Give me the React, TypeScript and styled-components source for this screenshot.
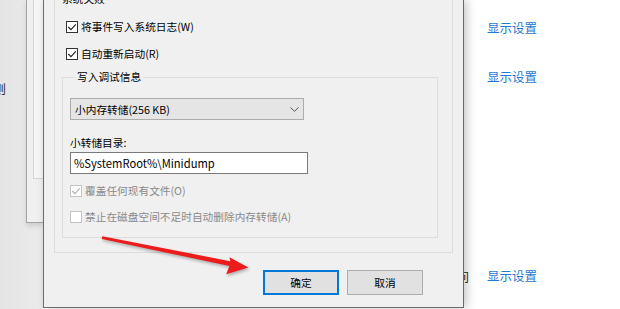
import styled, { createGlobalStyle } from 'styled-components'

const GlobalStyle = createGlobalStyle`
  html, body {
    margin: 0;
    padding: 0;
    background: #ffffff;
  }
`

const UI_FONT = `"Noto Sans CJK SC", "Liberation Sans", sans-serif`

const Screen = styled.div`
  position: relative;
  display: flex;
  width: 620px;
  height: 309px;
  overflow: hidden;
  background: #ffffff;
  font-family: ${UI_FONT};
`

// windows that lie behind the dialog, on the left
const Backdrop = styled.div`
  flex: none;
  display: flex;
  width: 43px;
  background: linear-gradient(90deg, #e4e4e4, #ebebeb);
`
const PageEdge = styled.div`
  flex: none;
  width: 26px;
  padding-top: 81px;
  overflow: hidden;
`
const CutGlyph = styled.span`
  display: block;
  margin-left: -6px;
  font-size: 12px;
  line-height: 16px;
  color: #2a2a2a;
`
const BackWindow = styled.div`
  flex: 1;
  align-self: flex-start;
  display: flex;
  height: 222px;
  padding-left: 6px;
  background: #f0f0f0;
  border-left: 1px solid #a3a3a3;
  border-bottom: 1px solid #a3a3a3;
  box-shadow: 0 3px 5px rgba(0, 0, 0, 0.12);
`
const BackPanel = styled.div`
  flex: 1;
  height: 178px;
  background: #f6f6f6;
  border-left: 1px solid #d6d6d6;
  border-bottom: 1px solid #d6d6d6;
`

const Dialog = styled.div`
  position: relative;
  z-index: 1;
  flex: none;
  display: flex;
  flex-direction: column;
  width: 421px;
  height: 308px;
  box-sizing: border-box;
  padding: 0 0 0 10px;
  background: #f0f0f0;
  border: 1px solid #6b6b6b;
  border-top: none;
  box-shadow: 3px 0 9px rgba(0, 0, 0, 0.22);
  font-size: 10.7px;
  color: #000;
`

const Group = styled.fieldset<{ $outer?: boolean }>`
  margin: ${(p) => (p.$outer ? '-9px 0 0 0' : '9px 14px 14px 7px')};
  padding: ${(p) => (p.$outer ? '0' : '0 0 14px 7px')};
  width: ${(p) => (p.$outer ? '399px' : 'auto')};
  align-self: stretch;
  box-sizing: border-box;
  min-inline-size: 0;
  border: 1px solid #dcdcdc;
  display: flex;
  flex-direction: column;
  align-items: flex-start;
`
const Legend = styled.legend`
  margin-left: 5px;
  padding: 0 2px;
  font-size: 10.7px;
  line-height: 16px;
`

const CheckRow = styled.label<{ $top: number; $indent: number; $disabled?: boolean }>`
  display: flex;
  align-items: center;
  gap: 3px;
  height: 12px;
  margin-top: ${(p) => p.$top}px;
  margin-left: ${(p) => p.$indent}px;
  line-height: 12px;
  white-space: nowrap;
  color: ${(p) => (p.$disabled ? '#8a8a8a' : '#000')};
`
const Box = styled.span<{ $disabled?: boolean }>`
  display: flex;
  flex: none;
  width: 12px;
  height: 12px;
  box-sizing: border-box;
  background: #fff;
  border: 1px solid ${(p) => (p.$disabled ? '#c4c4c4' : '#333')};
`

const Select = styled.div`
  display: flex;
  align-items: center;
  justify-content: space-between;
  width: 234px;
  height: 22px;
  margin-top: 13px;
  padding: 0 4px 0 4px;
  box-sizing: border-box;
  background: #e5e5e5;
  border: 1px solid #acacac;
`
const FieldLabel = styled.div`
  margin-top: 15px;
  margin-bottom: 1px;
  line-height: 16px;
`
const TextInput = styled.div`
  display: flex;
  align-items: center;
  width: 238px;
  height: 22px;
  padding-left: 3px;
  box-sizing: border-box;
  background: #fff;
  border: 1px solid #7a7a7a;
  font-size: 11.2px;
`

const ButtonBar = styled.div`
  display: flex;
  justify-content: flex-end;
  gap: 8px;
  margin-top: 17px;
  padding-right: 40px;
`
const Button = styled.button<{ $default?: boolean }>`
  width: 76px;
  height: 25px;
  padding: 0;
  box-sizing: border-box;
  background: #e1e1e1;
  border: ${(p) => (p.$default ? '2px solid #0078d7' : '1px solid #adadad')};
  font-family: ${UI_FONT};
  font-size: 10.7px;
  color: #000;
`

// settings page on the right
const SidePane = styled.div`
  flex: 1;
  display: flex;
  flex-direction: column;
  align-items: flex-start;
`
const LinkRow = styled.div<{ $top: number }>`
  display: flex;
  align-items: center;
  height: 16px;
  margin-top: ${(p) => p.$top}px;
`
const Peek = styled.span`
  width: 5px;
  overflow: hidden;
  direction: rtl;
  font-size: 12px;
  color: #222;
`
const SettingsLink = styled.a<{ $indent: number }>`
  margin-left: ${(p) => p.$indent}px;
  font-size: 12.5px;
  line-height: 16px;
  color: #1f78d1;
  text-decoration: none;
`

const ArrowLayer = styled.svg`
  position: absolute;
  left: 0;
  top: 0;
  z-index: 2;
  pointer-events: none;
  filter: drop-shadow(1px 2px 1.5px rgba(0, 0, 0, 0.28));
`

function Check({ disabled }: { disabled?: boolean }) {
  return (
    <svg width="10" height="10" viewBox="0 0 10 10">
      <polyline
        points="1.3,5 3.9,7.6 8.8,2.3"
        fill="none"
        stroke={disabled ? '#b0b0b0' : '#222'}
        strokeWidth="1.1"
      />
    </svg>
  )
}

function CheckBox({
  top,
  indent,
  label,
  checked,
  disabled,
}: {
  top: number
  indent: number
  label: string
  checked?: boolean
  disabled?: boolean
}) {
  return (
    <CheckRow $top={top} $indent={indent} $disabled={disabled}>
      <Box $disabled={disabled}>{checked && <Check disabled={disabled} />}</Box>
      {label}
    </CheckRow>
  )
}

export default function App() {
  return (
    <>
      <GlobalStyle />
      <Screen>
        <Backdrop>
          <PageEdge>
            <CutGlyph>则</CutGlyph>
          </PageEdge>
          <BackWindow>
            <BackPanel />
          </BackWindow>
        </Backdrop>

        <Dialog>
          <Group $outer>
            <Legend>系统失败</Legend>
            <CheckBox top={14} indent={11} label="将事件写入系统日志(W)" checked />
            <CheckBox top={15} indent={11} label="自动重新启动(R)" checked />
            <Group>
              <Legend>写入调试信息</Legend>
              <Select>
                <span>小内存转储(256 KB)</span>
                <svg width="9" height="5" viewBox="0 0 9 5">
                  <polyline points="0.5,0.5 4.5,4.3 8.5,0.5" fill="none" stroke="#555" strokeWidth="1" />
                </svg>
              </Select>
              <FieldLabel>小转储目录:</FieldLabel>
              <TextInput>%SystemRoot%\Minidump</TextInput>
              <CheckBox top={11} indent={0} label="覆盖任何现有文件(O)" checked disabled />
              <CheckBox top={14} indent={0} label="禁止在磁盘空间不足时自动删除内存转储(A)" disabled />
            </Group>
          </Group>
          <ButtonBar>
            <Button $default>确定</Button>
            <Button>取消</Button>
          </ButtonBar>
        </Dialog>

        <SidePane>
          <LinkRow $top={20}>
            <SettingsLink $indent={23}>显示设置</SettingsLink>
          </LinkRow>
          <LinkRow $top={33}>
            <SettingsLink $indent={23}>显示设置</SettingsLink>
          </LinkRow>
          <LinkRow $top={183}>
            <Peek>问</Peek>
            <SettingsLink $indent={18}>显示设置</SettingsLink>
          </LinkRow>
        </SidePane>

        <ArrowLayer width="620" height="309" viewBox="0 0 620 309">
          <path
            d="M101.8,238.9 L102.3,236.2 L230.3,261.2 L229.5,257.2 L248.5,267.6 L226.2,274.2 L229.4,266.1 Z"
            fill="#ec1c1c"
          />
        </ArrowLayer>
      </Screen>
    </>
  )
}
